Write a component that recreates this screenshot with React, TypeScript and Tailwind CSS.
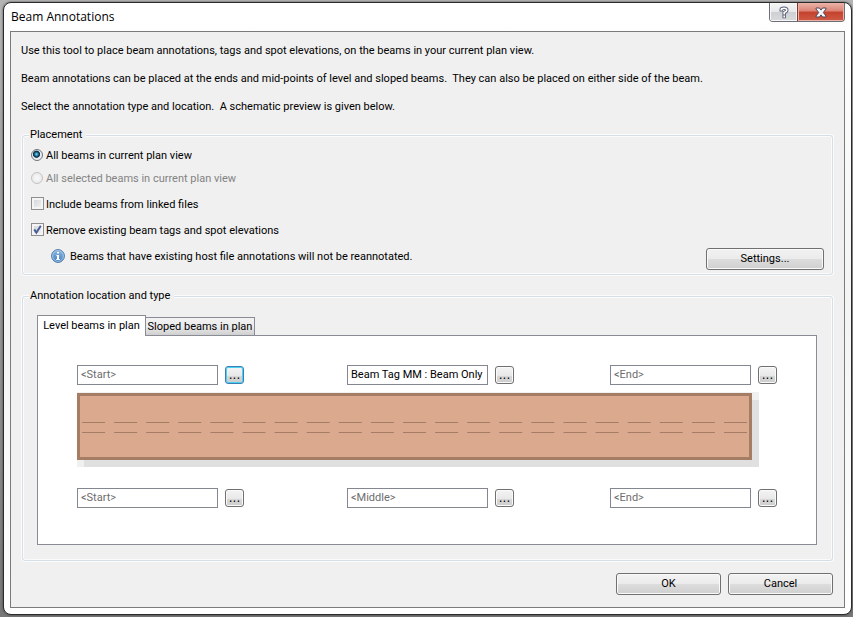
import { useState } from 'react'
import type { ButtonHTMLAttributes, InputHTMLAttributes, ReactNode } from 'react'
import clsx from 'clsx'

interface Slot {
  id: string
  placeholder: string
  value: string
}

const TABS = ['Level beams in plan', 'Sloped beams in plan']

const TOP_SLOTS: Slot[] = [
  { id: 'top-start', placeholder: '<Start>', value: '' },
  { id: 'top-middle', placeholder: '<Middle>', value: 'Beam Tag MM : Beam Only' },
  { id: 'top-end', placeholder: '<End>', value: '' },
]

const BOTTOM_SLOTS: Slot[] = [
  { id: 'bottom-start', placeholder: '<Start>', value: '' },
  { id: 'bottom-middle', placeholder: '<Middle>', value: '' },
  { id: 'bottom-end', placeholder: '<End>', value: '' },
]

function PushButton({ className, ...props }: ButtonHTMLAttributes<HTMLButtonElement>) {
  return (
    <button
      type="button"
      className={clsx(
        'h-[22px] rounded-[3px] border border-[#707070] bg-[linear-gradient(#f2f2f2,#ebebeb_50%,#dddddd_50%,#cfcfcf)] text-center inset-shadow-[0_0_0_1px_#fafafa]',
        className,
      )}
      {...props}
    />
  )
}

function Radio(props: InputHTMLAttributes<HTMLInputElement>) {
  return (
    <input
      type="radio"
      className="mt-px size-3 shrink-0 appearance-none rounded-full border border-[#8a8c8e] bg-[radial-gradient(circle,#f8f8f8_40%,#d9dcdf_100%)] checked:border-[#6f7478] checked:bg-[radial-gradient(circle_at_45%_42%,#8fdcf5_0,#2b86ad_18%,#10354f_34%,#10354f_40%,#e6eaed_50%,#f8f8f8_100%)] disabled:border-[#c3c3c3] disabled:bg-[radial-gradient(circle,#f6f6f6_20%,#e2e2e2_100%)]"
      {...props}
    />
  )
}

function Checkbox(props: InputHTMLAttributes<HTMLInputElement>) {
  return (
    <span className="relative flex size-[13px] shrink-0">
      <input
        type="checkbox"
        className="peer size-full appearance-none border border-[#8e8f8f] bg-linear-to-br from-[#cdd1d6] to-[#f6f6f6] inset-shadow-[0_0_0_2px_#f4f4f4]"
        {...props}
      />
      <svg
        viewBox="0 0 13 13"
        className="pointer-events-none absolute inset-0 hidden size-full peer-checked:block"
      >
        <path d="M3.2 6.4 L5.4 9.6 L9.8 2.8" fill="none" stroke="#4a5f97" strokeWidth="2" />
      </svg>
    </span>
  )
}

function Group({ title, className, children }: { title: string; className?: string; children: ReactNode }) {
  return (
    <fieldset
      className={clsx(
        'ml-px min-w-0 rounded-[3px] border border-[#d5dfe5] px-1.5 shadow-[0_0_0_1px_#fbfbfb] inset-shadow-[0_0_0_1px_#fbfbfb]',
        className,
      )}
    >
      <legend className="bg-[#f0f0f0] pr-1 pl-px">{title}</legend>
      {children}
    </fieldset>
  )
}

function InfoIcon() {
  return (
    <svg viewBox="0 0 14 14" className="size-3.5 shrink-0">
      <defs>
        <linearGradient id="info-fill" x1="0" y1="0" x2="0" y2="1">
          <stop offset="0" stopColor="#8fb8e0" />
          <stop offset="1" stopColor="#3f7fc4" />
        </linearGradient>
      </defs>
      <circle cx="7" cy="7" r="6.4" fill="url(#info-fill)" stroke="#4a78a8" strokeWidth="1" />
      <circle cx="7" cy="7" r="5.4" fill="none" stroke="#b4d0ea" strokeWidth="0.8" />
      <path d="M6 3h2v1.6H6zM5.4 6H8v4h.8v1H5.2v-1H6V7h-.6z" fill="#fff" />
    </svg>
  )
}

function CaptionButtons() {
  return (
    <div className="flex h-[19px] overflow-hidden rounded-b-[4px] border border-t-0 border-[#6c6f75]">
      <button
        type="button"
        aria-label="Help"
        className="flex w-[27px] items-center justify-center bg-[linear-gradient(#f6f6f6,#e6e7e9_50%,#cdcfd2_50%,#d8dadc)] inset-shadow-[0_0_0_1px_#f7f7f7]"
      >
        <svg viewBox="0 0 10 13" className="h-[13px] w-2.5">
          <g fill="none" strokeLinecap="square">
            <path
              d="M2.2 3.8 Q2.2 2.2 5 2.2 Q7.8 2.2 7.8 4.2 Q7.8 5.6 5.2 6.6 V7.6 M5.2 10.4 V10.6"
              stroke="#5b5f74"
              strokeWidth="3.4"
            />
            <path
              d="M2.2 3.8 Q2.2 2.2 5 2.2 Q7.8 2.2 7.8 4.2 Q7.8 5.6 5.2 6.6 V7.6 M5.2 10.4 V10.6"
              stroke="#fff"
              strokeWidth="1.6"
            />
          </g>
        </svg>
      </button>
      <button
        type="button"
        aria-label="Close"
        className="flex w-[47px] items-center justify-center border-l border-[#7a3b33] bg-[linear-gradient(#eab5aa,#dc8273_45%,#c4422d_50%,#cf5b45)] inset-shadow-[0_0_0_1px_#eeb0a4]"
      >
        <svg viewBox="0 0 12 11" className="h-[11px] w-3">
          <path
            d="M1 1h3.4L6 3.1 7.6 1H11v1L8.3 5.5 11 9v1H7.6L6 7.9 4.4 10H1V9l2.7-3.5L1 2z"
            fill="#f6f6f6"
            stroke="#4d4a5c"
            strokeWidth="1"
            strokeLinejoin="round"
          />
        </svg>
      </button>
    </div>
  )
}

function SlotRow({ slots, active, className }: { slots: Slot[]; active?: string; className?: string }) {
  return (
    <div className={clsx('grid grid-cols-[270fr_263fr_167fr]', className)}>
      {slots.map((slot) => (
        <div key={slot.id} className="flex items-center gap-[7px]">
          <input
            type="text"
            aria-label={`${slot.id} annotation`}
            defaultValue={slot.value}
            placeholder={slot.placeholder}
            className="h-5 w-[141px] min-w-0 border border-[#828790] bg-white px-[3px] pb-0.5 placeholder:text-[#6d6d6d]"
          />
          <button
            type="button"
            aria-label={`Choose ${slot.id} annotation`}
            className={clsx(
              "flex h-[18px] w-[19px] shrink-0 items-center justify-center rounded-[3px] border bg-[linear-gradient(#f4f4f4,#e8e8e8_55%,#d8d8d8_55%,#cdcdcd)] font-['DejaVu_Sans',sans-serif] text-xs",
              active === slot.id
                ? 'border-[#3c7fb1] inset-shadow-[0_0_0_1px_#48d2f5]'
                : 'border-[#707070] inset-shadow-[0_0_0_1px_#fafafa]',
            )}
          >
            ...
          </button>
        </div>
      ))}
    </div>
  )
}

function BeamPreview() {
  return (
    <div className="mt-[7px] mr-[18px] bg-[#f0f0f0] pt-px pr-[7px] pb-[7px]">
      <div className="h-[67px] border-[3px] border-[#a47d64] bg-[#dbaa8e] shadow-[7px_7px_0_#e0e0e0]">
        <svg className="block h-full w-full" aria-hidden="true">
          <g stroke="#a47d64" strokeWidth="1" strokeDasharray="23 9.1">
            <line x1="2" y1="26.5" x2="100%" y2="26.5" />
            <line x1="2" y1="36.5" x2="100%" y2="36.5" />
          </g>
        </svg>
      </div>
    </div>
  )
}

export default function App() {
  const [tab, setTab] = useState(0)
  const [scope, setScope] = useState('all')

  return (
    <div className="flex min-h-screen bg-linear-to-b from-[#b4b4b4] to-[#777777] pt-0.5 pr-px pb-0.5 pl-[3px] font-['Roboto','Liberation_Sans',sans-serif] text-[11px] leading-[14px] text-black">
      <div className="flex flex-1 flex-col rounded-lg border border-[#2b2b2b] bg-linear-to-b from-white via-[#f4f4f4] to-white px-1.5 pb-1.5 shadow-[0_0_2px_#333333]">
        <header className="flex h-7 items-start justify-between">
          <h1 className="ml-px pt-1.5 font-['Open_Sans','Noto_Sans',sans-serif] text-xs leading-4">
            Beam Annotations
          </h1>
          <CaptionButtons />
        </header>

        <main className="flex flex-1 flex-col border border-[#7b7b7b] bg-[#f0f0f0] pt-3 pr-[11px] pb-3 pl-2.5">
          <div className="space-y-3.5 whitespace-pre-wrap">
            <p>Use this tool to place beam annotations, tags and spot elevations, on the beams in your current plan view.</p>
            <p>
              {'Beam annotations can be placed at the ends and mid-points of level and sloped beams.  They can also be placed on either side of the beam.'}
            </p>
            <p>{'Select the annotation type and location.  A schematic preview is given below.'}</p>
          </div>

          <Group title="Placement" className="mt-3.5 pb-1">
            <div className="flex flex-col items-start pt-1.5 pl-0.5">
              <label className="flex gap-[3px]">
                <Radio name="scope" checked={scope === 'all'} onChange={() => setScope('all')} />
                <span className="pt-px">All beams in current plan view</span>
              </label>
              <label className="mt-2 flex gap-[3px] text-[#838383]">
                <Radio name="scope" checked={scope === 'selected'} onChange={() => setScope('selected')} disabled />
                <span className="pt-px">All selected beams in current plan view</span>
              </label>
              <label className="mt-[11px] flex gap-0.5">
                <Checkbox />
                <span className="pt-px">Include beams from linked files</span>
              </label>
              <label className="mt-[11px] flex gap-0.5">
                <Checkbox defaultChecked />
                <span className="pt-px">Remove existing beam tags and spot elevations</span>
              </label>
            </div>
            <div className="mt-2.5 flex items-start justify-between pr-0.5 pl-[22px]">
              <p className="flex gap-[5px] pt-px">
                <InfoIcon />
                <span className="pt-px">Beams that have existing host file annotations will not be reannotated.</span>
              </p>
              <PushButton className="w-[118px]">Settings...</PushButton>
            </div>
          </Group>

          <Group title="Annotation location and type" className="mt-3.5 pb-[15px]">
            <div className="pr-[9px] pl-2">
              <div role="tablist" className="flex items-end pt-3">
                {TABS.map((label, i) => (
                  <button
                    key={label}
                    type="button"
                    role="tab"
                    aria-selected={tab === i}
                    onClick={() => setTab(i)}
                    className={clsx(
                      'w-[109px] border border-b-0 border-[#898c95] whitespace-nowrap',
                      tab === i
                        ? 'relative -mb-px h-[21px] bg-white'
                        : 'h-[18px] bg-linear-to-b from-[#f2f2f2] via-[#ebebeb] to-[#cfcfcf] first:border-r-0 last:border-l-0',
                    )}
                  >
                    {label}
                  </button>
                ))}
              </div>
              <div role="tabpanel" className="border border-[#898c95] bg-white px-[39px] pt-[29px] pb-9">
                <SlotRow slots={TOP_SLOTS} active="top-start" />
                <BeamPreview />
                <SlotRow slots={BOTTOM_SLOTS} className="mt-[21px]" />
              </div>
            </div>
          </Group>

          <footer className="mt-auto flex justify-end gap-[7px] pt-3">
            <PushButton className="w-[105px]">OK</PushButton>
            <PushButton className="w-[105px]">Cancel</PushButton>
          </footer>
        </main>
      </div>
    </div>
  )
}
